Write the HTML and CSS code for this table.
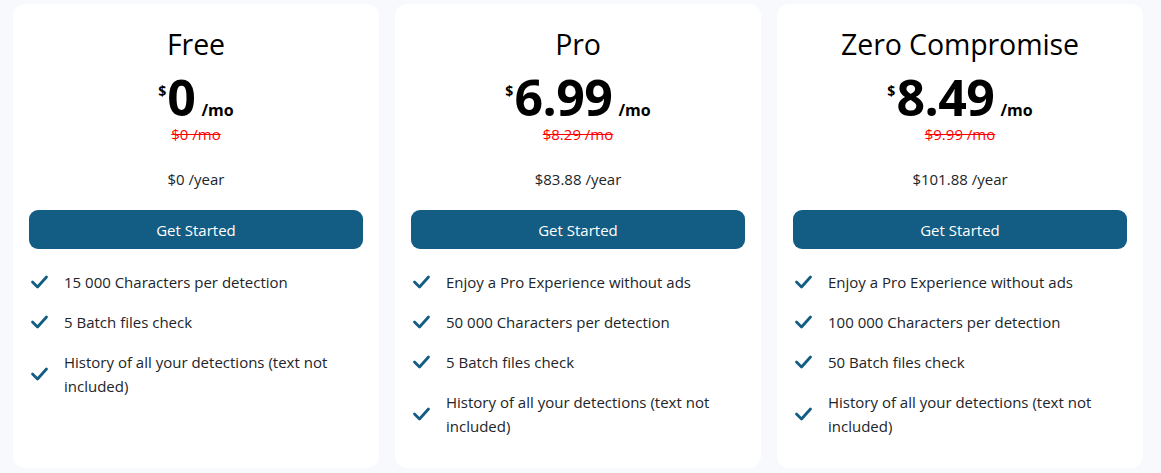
FILE: index.html
```html
<!DOCTYPE html>
<html lang="en">
<head>
<meta charset="utf-8">
<title>Pricing</title>
<link rel="stylesheet" href="styles.css">
</head>
<body>
<div class="plans">
  <div class="card">
    <h2 class="title">Free</h2>
    <div class="price"><span class="cur">$</span><span class="amount">0</span><span class="per">/mo</span></div>
    <div class="old">$0 /mo</div>
    <div class="year">$0 /year</div>
    <button class="btn">Get Started</button>
    <ul class="features">
      <li><svg class="check" viewBox="0 0 18 14"><polyline points="2,7 7,12 16,2"/></svg><span>15 000 Characters per detection</span></li>
      <li><svg class="check" viewBox="0 0 18 14"><polyline points="2,7 7,12 16,2"/></svg><span>5 Batch files check</span></li>
      <li><svg class="check" viewBox="0 0 18 14"><polyline points="2,7 7,12 16,2"/></svg><span>History of all your detections (text not included)</span></li>
    </ul>
  </div>
  <div class="card">
    <h2 class="title">Pro</h2>
    <div class="price"><span class="cur">$</span><span class="amount">6.99</span><span class="per">/mo</span></div>
    <div class="old">$8.29 /mo</div>
    <div class="year">$83.88 /year</div>
    <button class="btn">Get Started</button>
    <ul class="features">
      <li><svg class="check" viewBox="0 0 18 14"><polyline points="2,7 7,12 16,2"/></svg><span>Enjoy a Pro Experience without ads</span></li>
      <li><svg class="check" viewBox="0 0 18 14"><polyline points="2,7 7,12 16,2"/></svg><span>50 000 Characters per detection</span></li>
      <li><svg class="check" viewBox="0 0 18 14"><polyline points="2,7 7,12 16,2"/></svg><span>5 Batch files check</span></li>
      <li><svg class="check" viewBox="0 0 18 14"><polyline points="2,7 7,12 16,2"/></svg><span>History of all your detections (text not included)</span></li>
    </ul>
  </div>
  <div class="card">
    <h2 class="title">Zero Compromise</h2>
    <div class="price"><span class="cur">$</span><span class="amount">8.49</span><span class="per">/mo</span></div>
    <div class="old">$9.99 /mo</div>
    <div class="year">$101.88 /year</div>
    <button class="btn">Get Started</button>
    <ul class="features">
      <li><svg class="check" viewBox="0 0 18 14"><polyline points="2,7 7,12 16,2"/></svg><span>Enjoy a Pro Experience without ads</span></li>
      <li><svg class="check" viewBox="0 0 18 14"><polyline points="2,7 7,12 16,2"/></svg><span>100 000 Characters per detection</span></li>
      <li><svg class="check" viewBox="0 0 18 14"><polyline points="2,7 7,12 16,2"/></svg><span>50 Batch files check</span></li>
      <li><svg class="check" viewBox="0 0 18 14"><polyline points="2,7 7,12 16,2"/></svg><span>History of all your detections (text not included)</span></li>
    </ul>
  </div>
</div>
</body>
</html>
```

FILE: styles.css
```css
* { box-sizing: border-box; }
html, body { margin: 0; padding: 0; }
body {
  background: #f8f9fc;
  font-family: "Open Sans", "Noto Sans", sans-serif;
  color: #000;
  width: 1161px;
  height: 473px;
  overflow: hidden;
}
.plans {
  display: flex;
  gap: 16px;
  padding: 4px 18px 5px 13px;
  height: 473px;
}
.card {
  flex: 0 0 366px;
  background: #fff;
  border-radius: 12px;
  padding: 23px 16px 16px;
  display: flex;
  flex-direction: column;
}
.title {
  margin: 0;
  text-align: center;
  font-size: 28.5px;
  font-weight: 500;
  line-height: 34px;
  letter-spacing: -0.1px;
}
.price {
  margin-top: 12px;
  display: flex;
  justify-content: center;
  align-items: baseline;
  height: 48px;
  line-height: 48px;
}
.cur {
  font-size: 14px;
  font-weight: 700;
  align-self: flex-start;
  line-height: 14px;
  margin-top: 11px;
  margin-right: 1px;
}
.amount {
  font-size: 50px;
  font-weight: 700;
  letter-spacing: -0.5px;
}
.per {
  font-size: 16px;
  font-weight: 700;
  margin-left: 6px;
}
.old {
  margin-top: 3px;
  text-align: center;
  color: #ff0000;
  text-decoration: line-through;
  font-size: 15px;
  line-height: 20px;
}
.year {
  margin-top: 25px;
  text-align: center;
  font-size: 15px;
  line-height: 20px;
  color: #212529;
}
.btn {
  margin-top: 21px;
  height: 39px;
  width: 100%;
  border: 0;
  border-radius: 9px;
  background: #135d84;
  color: #fff;
  font-family: inherit;
  font-size: 15px;
}
.features {
  list-style: none;
  margin: 21px 0 0;
  padding: 0;
  display: flex;
  flex-direction: column;
  gap: 16px;
}
.features li {
  display: flex;
  align-items: center;
  gap: 15px;
  font-size: 15px;
  line-height: 24px;
  color: #212529;
  padding-left: 1px;
}
.check {
  flex: 0 0 19px;
  width: 19px;
  height: 14px;
  fill: none;
  stroke: #135d84;
  stroke-width: 2.8;
  stroke-linecap: round;
  stroke-linejoin: round;
}
```
